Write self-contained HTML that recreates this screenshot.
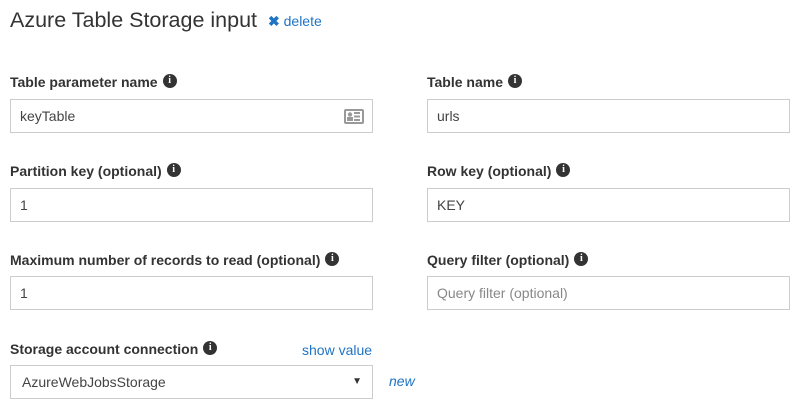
<!DOCTYPE html>
<html><head><style>
body{margin:0;width:800px;height:411px;background:#fff;font-family:"Liberation Sans",sans-serif;color:#333;position:relative;overflow:hidden}
.a{position:absolute}
h1{position:absolute;left:10px;top:8px;margin:0;font-weight:normal;font-size:21.5px;color:#333}
.del{position:absolute;left:268px;top:13px;font-size:14px;color:#1f74c4}
.lbl{position:absolute;font-size:14px;font-weight:bold;color:#333;line-height:16px}
.i{display:inline-block;width:14px;height:14px;border-radius:50%;background:#333;color:#fff;font-size:10px;line-height:14px;text-align:center;font-family:"Liberation Serif",serif;font-weight:bold;vertical-align:top;margin-left:5px;margin-top:0px}
.in{position:absolute;height:34px;border:1px solid #ccc;box-sizing:border-box;font-size:14px;line-height:32px;padding-left:9px;color:#444}
.ph{color:#888}
</style></head><body>
<h1>Azure Table Storage input</h1>
<div class="del"><b>✖</b> delete</div>

<div class="lbl" style="left:10px;top:74px">Table parameter name<span class="i">i</span></div>
<div class="in" style="left:10px;top:99px;width:363px">keyTable
<svg class="a" style="right:8px;top:9px" width="20" height="15"><rect x="0" y="0" width="20" height="15" rx="2" fill="#999"/><rect x="2" y="2" width="16" height="11" fill="#fff"/><circle cx="6" cy="5.5" r="2.2" fill="#999"/><rect x="3" y="8" width="6" height="4" fill="#999"/><rect x="10" y="3" width="6" height="2" fill="#999"/><rect x="10" y="6.5" width="6" height="2" fill="#999"/><rect x="10" y="10" width="6" height="2" fill="#999"/></svg></div>
<div class="lbl" style="left:427px;top:74px">Table name<span class="i">i</span></div>
<div class="in" style="left:427px;top:99px;width:363px">urls</div>

<div class="lbl" style="left:10px;top:163px">Partition key (optional)<span class="i">i</span></div>
<div class="in" style="left:10px;top:188px;width:363px">1</div>
<div class="lbl" style="left:427px;top:163px">Row key (optional)<span class="i">i</span></div>
<div class="in" style="left:427px;top:188px;width:363px">KEY</div>

<div class="lbl" style="left:10px;top:252px">Maximum number of records to read (optional)<span class="i">i</span></div>
<div class="in" style="left:10px;top:276px;width:363px">1</div>
<div class="lbl" style="left:427px;top:252px">Query filter (optional)<span class="i">i</span></div>
<div class="in ph" style="left:427px;top:276px;width:363px">Query filter (optional)</div>

<div class="lbl" style="left:10px;top:341px">Storage account connection<span class="i">i</span></div>
<div class="a" style="left:302px;top:342px;font-size:14px;color:#1f74c4">show value</div>
<div class="in" style="left:10px;top:365px;width:363px;padding-left:11px">AzureWebJobsStorage<span class="a" style="right:10px;top:0;font-size:10px;color:#333">▼</span></div>
<div class="a" style="left:389px;top:373px;font-size:14px;color:#1f74c4;font-style:italic">new</div>
</body></html>
